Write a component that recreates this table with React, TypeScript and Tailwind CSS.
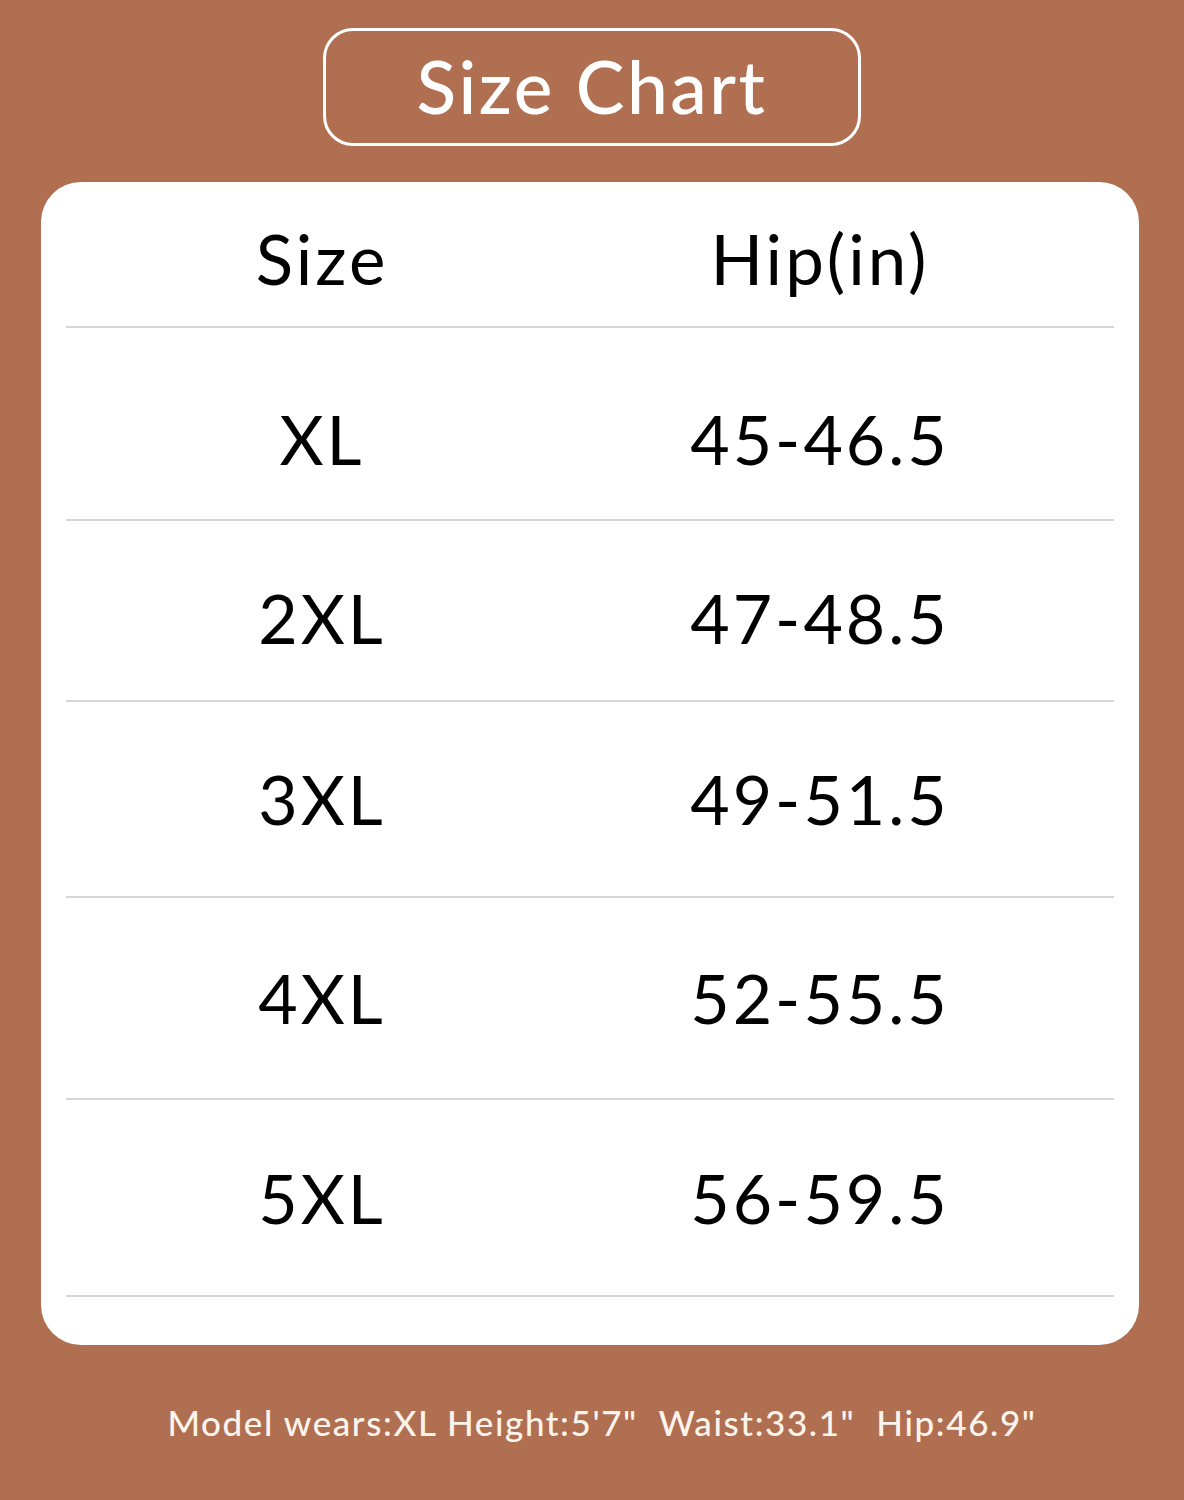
const ROWS = [
  { size: "XL", hip: "45-46.5", h: "h-[193px]", pt: "pt-[30px]" },
  { size: "2XL", hip: "47-48.5", h: "h-[181px]", pt: "pt-[14px]" },
  { size: "3XL", hip: "49-51.5", h: "h-[196px]", pt: "pt-0" },
  { size: "4XL", hip: "52-55.5", h: "h-[202px]", pt: "pt-0" },
  { size: "5XL", hip: "56-59.5", h: "h-[197px]", pt: "pt-0" },
];

export default function App() {
  return (
    <div
      className="w-[1184px] h-[1500px] bg-[#b06f51] flex flex-col items-center"
      style={{ fontFamily: "Lato, 'Open Sans', sans-serif" }}
    >
      {/* title pill */}
      <div className="mt-[28px] w-[538px] h-[118px] border-[3px] border-white rounded-[30px] flex items-center justify-center">
        <span className="text-white text-[73px] font-medium tracking-[2.5px] leading-none -mt-[2px]">
          Size Chart
        </span>
      </div>

      {/* table card */}
      <div className="mt-[36px] self-start ml-[41px] w-[1098px] bg-white rounded-[40px] px-[25px] pb-[48px]">
        <div className="h-[146px] flex items-center border-b-2 border-[#d6d6d6] text-black text-[69px] tracking-[3px] leading-none">
          <div className="w-[512px] text-center pt-[8px]">Size</div>
          <div className="w-[484px] text-center pt-[8px]">Hip(in)</div>
        </div>
        {ROWS.map((r) => (
          <div
            key={r.size}
            className={`${r.h} flex items-center border-b-2 border-[#d6d6d6] text-black text-[68px] tracking-[3px] leading-none`}
          >
            <div className={`w-[512px] text-center ${r.pt}`}>{r.size}</div>
            <div className={`w-[484px] text-center ${r.pt}`}>{r.hip}</div>
          </div>
        ))}
      </div>

      <p className="mt-[60px] ml-[20px] text-[#fbf4ec] text-[35px] tracking-[1.6px] leading-none font-medium whitespace-pre">
        {'Model wears:XL Height:5\'7"  Waist:33.1"  Hip:46.9"'}
      </p>
    </div>
  );
}
